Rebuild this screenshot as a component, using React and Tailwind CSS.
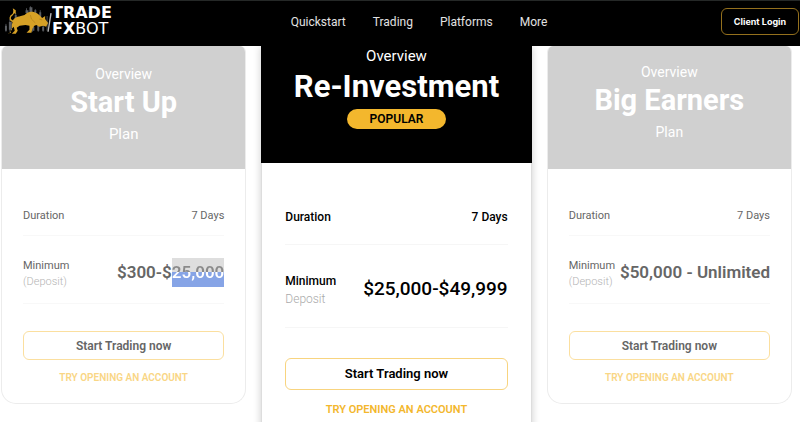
import React from 'react';

const navLinks = ['Quickstart', 'Trading', 'Platforms', 'More'];

function BullLogo() {
  return (
    <svg viewBox="0 0 50 36" className="h-9 w-[49px] shrink-0" aria-hidden="true">
      <g stroke="#4b4e52" strokeWidth="1">
        <path d="M3 23V31M7 18V31M13 12V20M24 7V12M28 5V12M33 8V14M38 9V17M30 24V31M36 23V31M41 24V31M45 15V30" />
      </g>
      <g fill="#5c5f63">
        <path d="M2 25h2v5H2zM6 21h3v8H6zM12 14h2v5h-2zM23 9h3v3h-3zM27 6h3v6h-3zM32 9h2v5h-2zM37 11h2v5h-2zM30 26h2v4h-2zM35 25h2v5h-2zM40 26h2v4h-2z" />
      </g>
      <path d="M49 12 46 31" stroke="#b5b5b5" strokeWidth="1.4" />
      <path d="M12 21C8 20 6 18 8 15 10 13 12 13 11 10" fill="none" stroke="#d6a126" strokeWidth="1.4" />
      <path d="M10 7l3 2 0 4-2-1z" fill="#d6a126" />
      <path
        d="M10 20c2-5 7-4 12-6 3-3 6-4 10-3 4 1 6 4 8 6l3-2 0 3 3 4-2 4-3-1-4 1-3-2-2 1-2 3-1 4h-5l3-3 0-4-4-1-6 1-3 2 1 3-2 3h-4l3-3-1-4-3 3 0 3-3 1H6l3-4 0-5z"
        fill="#d6a126"
      />
      <path d="M28 14l1 4 4 4M37 18l3 1" fill="none" stroke="#a87816" strokeWidth=".6" />
    </svg>
  );
}

function Header() {
  return (
    <header className="relative grid h-[46px] grid-cols-[1fr_auto_1fr] items-center border-t border-[#252827] bg-black">
      <a href="#" className="flex h-full items-start pl-[3px] font-['DejaVu_Sans',sans-serif] text-white">
        <BullLogo />
        <span className="pt-1 text-[16px] leading-4">
          <span className="block font-bold">TRADE</span>
          <span className="block"><b>FX</b>BOT</span>
        </span>
      </a>
      <nav className="flex gap-[27px] pb-1 pl-[38px] text-[12px] leading-5 text-[#e2e2e2]">
        {navLinks.map((label) => (
          <a key={label} href="#">{label}</a>
        ))}
      </nav>
      <button className="mr-px mb-1 h-[27px] w-[78px] justify-self-end rounded-md border border-[#94701d] font-['Inter',sans-serif] text-[9px] font-bold text-white">
        Client Login
      </button>
    </header>
  );
}

function SideCard({ title, amount, headClass, planClass }) {
  return (
    <article className="overflow-hidden rounded-t-md rounded-b-[15px] border border-t-0 border-[#ececec] text-[#666]">
      <div className={`h-[123px] bg-[#d0d0d0] text-center text-white ${headClass}`}>
        <p className="text-[14px] leading-5">Overview</p>
        <h2 className="text-[29px] leading-9 font-bold">{title}</h2>
        <p className={`mt-1 leading-5 ${planClass}`}>Plan</p>
      </div>
      <div className="px-[21px] pt-[37px] pb-[15px]">
        <dl>
          <div className="flex justify-between border-b border-[#f8f8f8] pb-[9px] text-[11px] leading-5">
            <dt>Duration</dt>
            <dd>7 Days</dd>
          </div>
          <div className="flex h-[68px] items-center justify-between border-b border-[#f8f8f8] whitespace-nowrap">
            <dt className="pt-2 text-[11px] leading-4">
              Minimum
              <span className="block font-light text-[#b4b4b4]">(Deposit)</span>
            </dt>
            <dd className="pt-1.5 text-[17px] leading-[29px] font-semibold">{amount}</dd>
          </div>
        </dl>
        <button className="mt-[27px] block h-[29px] w-full rounded-md border border-[#fbdf9f] text-[12px] font-semibold">
          Start Trading now
        </button>
        <a href="#" className="mt-2 block text-center text-[10px] leading-5 font-semibold text-[#f9d685]">
          TRY OPENING AN ACCOUNT
        </a>
      </div>
    </article>
  );
}

function PopularCard() {
  return (
    <article className="border-x border-[#ddd] bg-white text-black shadow-[0_0_8px_rgba(0,0,0,0.2)]">
      <div className="-mx-px flex h-[117px] flex-col items-center bg-black text-white">
        <p className="text-[15px] leading-5">Overview</p>
        <h2 className="mt-[3px] text-[31px] leading-9 font-bold">Re-Investment</h2>
        <span className="mt-1 w-[99px] rounded-full bg-[#f3b72d] text-center text-[12px] leading-5 font-semibold text-black">
          POPULAR
        </span>
      </div>
      <div className="px-[23px] pt-11 pb-4">
        <dl>
          <div className="flex justify-between border-b border-[#f6f6f6] pb-[17px] text-[12px] leading-5 font-medium">
            <dt>Duration</dt>
            <dd>7 Days</dd>
          </div>
          <div className="flex h-[83px] items-center justify-between border-b border-[#f6f6f6] whitespace-nowrap">
            <dt className="pt-2 text-[12px] leading-[18px] font-medium">
              Minimum
              <span className="block font-light text-[#aaa]">Deposit</span>
            </dt>
            <dd className="pt-1.5 text-[19px] leading-6 font-medium">$25,000-$49,999</dd>
          </div>
        </dl>
        <button className="mt-[30px] block h-8 w-full rounded-md border border-[#f8d47f] text-[13px] font-semibold">
          Start Trading now
        </button>
        <a href="#" className="mt-[10px] block text-center text-[11px] leading-5 font-semibold text-[#f3b72d]">
          TRY OPENING AN ACCOUNT
        </a>
      </div>
    </article>
  );
}

function SelectedText({ children }) {
  return (
    <span className="inline-block bg-linear-to-b from-[#dedede] from-50% to-[#86a4e6] to-50%">
      <span className="block bg-linear-to-b from-[#8a8a8a] from-50% to-white to-50% bg-clip-text text-transparent">
        {children}
      </span>
    </span>
  );
}

export default function App() {
  return (
    <div className="h-screen overflow-hidden bg-white font-['Roboto',sans-serif]">
      <Header />
      <main className="grid grid-cols-[245fr_270fr_245fr] items-start gap-x-[15px] pr-2 pl-px">
        <SideCard
          title="Start Up"
          amount={<>$300-$<SelectedText>25,000</SelectedText></>}
          headClass="pt-[18px]"
          planClass="text-[15px]"
        />
        <PopularCard />
        <SideCard
          title="Big Earners"
          amount="$50,000 - Unlimited"
          headClass="pt-4"
          planClass="text-[14px]"
        />
      </main>
    </div>
  );
}
